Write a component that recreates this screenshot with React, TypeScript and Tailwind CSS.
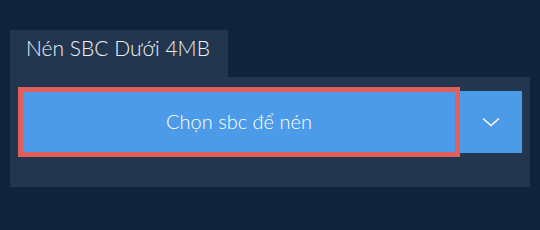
import React from "react";

export default function App() {
  return (
    <div className="w-[540px] h-[230px] bg-[#10233a] pt-[30px] px-[10px]" style={{ fontFamily: "Lato, 'Noto Sans', sans-serif" }}>
      <div className="flex">
        <div className="w-[218px] h-[47px] bg-[#22374f] pl-[16px] pt-[3px] text-[21px] font-light text-[#eef1f4] leading-[30px]">
          Nén SBC Dưới 4MB
        </div>
      </div>
      <div className="w-[520px] h-[110px] bg-[#22374f] pl-[8px] pr-[8px] pt-[10px]">
        <div className="flex items-center">
          <button className="flex-1 h-[70px] border-[5px] border-[#df605a] bg-[#4c9be8] text-white text-[20px] font-light flex items-center justify-center pb-[2px]">
            Chọn sbc để nén
          </button>
          <button className="w-[62px] h-[62px] bg-[#4c9be8] flex items-center justify-center">
            <svg width="18" height="10" viewBox="0 0 18 10" fill="none">
              <path d="M1 1.5 L9 8.5 L17 1.5" stroke="white" strokeWidth="1.5" />
            </svg>
          </button>
        </div>
      </div>
    </div>
  );
}
